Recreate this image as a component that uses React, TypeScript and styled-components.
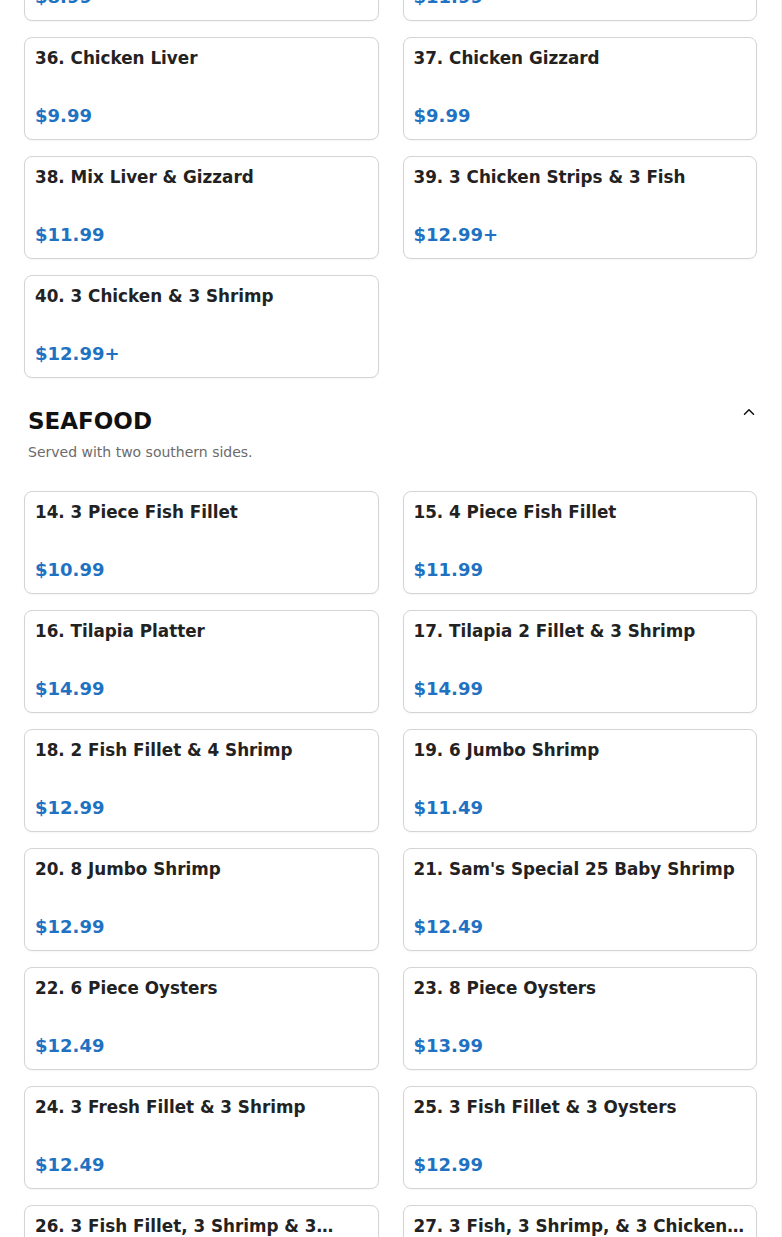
import React from "react";
import styled, { createGlobalStyle } from "styled-components";
import { ChevronUp } from "lucide-react";

const Global = createGlobalStyle`
  html, body { margin: 0; padding: 0; background: #fff; }
  body { font-family: "DejaVu Sans", "Liberation Sans", sans-serif; overflow: hidden; }
  * { box-sizing: border-box; }
`;

const Page = styled.div`
  width: 782px;
  height: 1237px;
  overflow: hidden;
  border-right: 1px solid #f2f2f2;
`;

const Scroller = styled.div`
  margin-top: -82px;
  padding: 0 24px;
`;

const Section = styled.section<{ $first?: boolean }>`
  margin-top: ${(p) => (p.$first ? "0" : "29px")};
`;

const Header = styled.div`
  display: flex;
  justify-content: space-between;
  align-items: flex-start;
  padding: 0 4px;
`;

const HeaderText = styled.div`
  display: flex;
  flex-direction: column;
`;

const Title = styled.h2`
  margin: 0;
  font-size: 23px;
  line-height: 28px;
  font-weight: 700;
  color: #111;
`;

const Subtitle = styled.p`
  margin: 7px 0 0;
  font-size: 14px;
  line-height: 21px;
  color: #6b6b6b;
`;

const Toggle = styled.button`
  border: none;
  background: none;
  padding: 0;
  margin-top: -4px;
  margin-right: -5px;
  color: #111;
  display: flex;
  cursor: pointer;
`;

const Grid = styled.div<{ $withHeader?: boolean }>`
  display: grid;
  grid-template-columns: 1fr 1fr;
  column-gap: 24px;
  row-gap: 16px;
  margin-top: ${(p) => (p.$withHeader ? "28px" : "0")};
`;

const Card = styled.div`
  height: 103px;
  border: 1px solid #d4d4d4;
  border-radius: 8px;
  background: #fff;
  box-shadow: 0 1px 2px rgba(0, 0, 0, 0.04);
  padding: 10px 10px 12px;
  display: flex;
  flex-direction: column;
  justify-content: space-between;
  min-width: 0;
`;

const ItemName = styled.div`
  font-size: 16.8px;
  line-height: 21px;
  font-weight: 700;
  color: #222;
  display: -webkit-box;
  -webkit-line-clamp: 1;
  -webkit-box-orient: vertical;
  overflow: hidden;
`;

const Price = styled.div`
  font-size: 18px;
  line-height: 22px;
  font-weight: 700;
  color: #1f72c2;
`;

type Item = { name: string; price: string };

const chicken: Item[] = [
  { name: "34. 3 Chicken Wings", price: "$8.99" },
  { name: "35. 5 Chicken Wings", price: "$11.99" },
  { name: "36. Chicken Liver", price: "$9.99" },
  { name: "37. Chicken Gizzard", price: "$9.99" },
  { name: "38. Mix Liver & Gizzard", price: "$11.99" },
  { name: "39. 3 Chicken Strips & 3 Fish", price: "$12.99+" },
  { name: "40. 3 Chicken & 3 Shrimp", price: "$12.99+" },
];

const seafood: Item[] = [
  { name: "14. 3 Piece Fish Fillet", price: "$10.99" },
  { name: "15. 4 Piece Fish Fillet", price: "$11.99" },
  { name: "16. Tilapia Platter", price: "$14.99" },
  { name: "17. Tilapia 2 Fillet & 3 Shrimp", price: "$14.99" },
  { name: "18. 2 Fish Fillet & 4 Shrimp", price: "$12.99" },
  { name: "19. 6 Jumbo Shrimp", price: "$11.49" },
  { name: "20. 8 Jumbo Shrimp", price: "$12.99" },
  { name: "21. Sam's Special 25 Baby Shrimp", price: "$12.49" },
  { name: "22. 6 Piece Oysters", price: "$12.49" },
  { name: "23. 8 Piece Oysters", price: "$13.99" },
  { name: "24. 3 Fresh Fillet & 3 Shrimp", price: "$12.49" },
  { name: "25. 3 Fish Fillet & 3 Oysters", price: "$12.99" },
  { name: "26. 3 Fish Fillet, 3 Shrimp & 3 Chicken Wings", price: "$15.99" },
  { name: "27. 3 Fish, 3 Shrimp, & 3 Chicken Strips", price: "$15.99" },
];

const Items = ({ items }: { items: Item[] }) => (
  <>
    {items.map((it) => (
      <Card key={it.name}>
        <ItemName>{it.name}</ItemName>
        <Price>{it.price}</Price>
      </Card>
    ))}
  </>
);

export default function App() {
  return (
    <Page>
      <Global />
      <Scroller>
        <Section $first>
          <Grid>
            <Items items={chicken} />
          </Grid>
        </Section>
        <Section>
          <Header>
            <HeaderText>
              <Title>SEAFOOD</Title>
              <Subtitle>Served with two southern sides.</Subtitle>
            </HeaderText>
            <Toggle aria-label="Collapse">
              <ChevronUp size={18} strokeWidth={2} />
            </Toggle>
          </Header>
          <Grid $withHeader>
            <Items items={seafood} />
          </Grid>
        </Section>
      </Scroller>
    </Page>
  );
}
